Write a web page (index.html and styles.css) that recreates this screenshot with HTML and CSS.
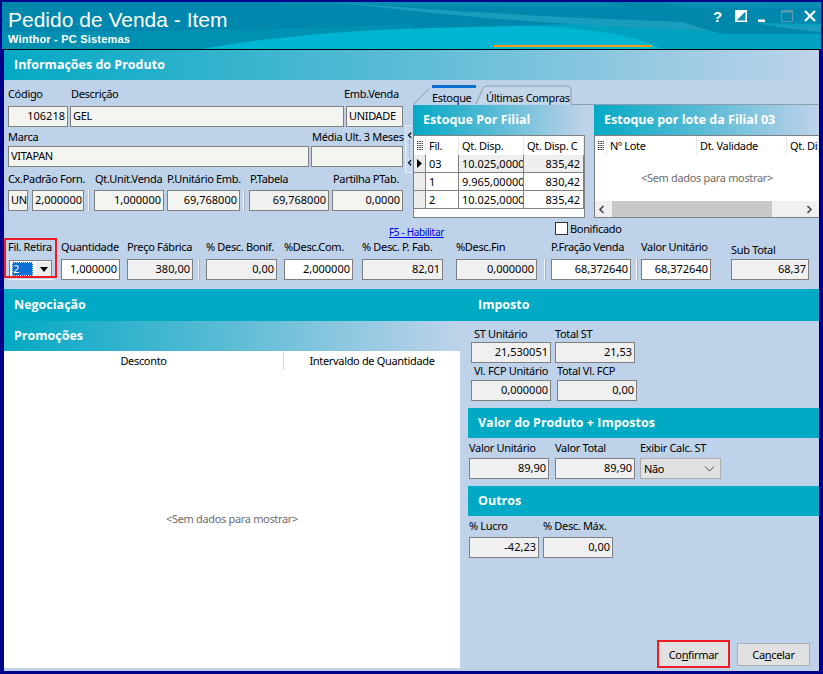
FILE: index.html
```html
<!DOCTYPE html>
<html lang="pt-BR">
<head>
<meta charset="utf-8">
<title>Pedido de Venda - Item</title>
<link rel="stylesheet" href="styles.css">
</head>
<body>
<div class="window">
  <header class="titlebar">
    <svg class="swoosh" viewBox="0 0 819 47" preserveAspectRatio="none" aria-hidden="true">
      <path d="M0 0H819V47H0Z" fill="#0087ad"/>
      <path d="M260 47C420 22 600 18 819 22V47Z" fill="#00a2c0"/>
      <path d="M280 47C420 36 520 30 560 26C450 30 340 38 280 47Z" fill="#00bdd6"/>
      <path d="M270 0C360 4 430 5 819 6V0Z" fill="#0a8fb2"/>
      <path d="M330 0C480 12 640 20 819 24V32C620 28 480 18 330 0Z" fill="#1a9cbc"/>
      <path d="M0 30C120 30 340 26 411 22V47H0Z" fill="#0094b4" opacity=".75"/>
      <path d="M200 47C300 30 380 26 520 24C600 26 640 36 660 47Z" fill="#00b6d2"/>
      <path d="M600 0C640 8 680 20 720 32H819V30C760 24 700 12 660 0Z" fill="#0088ab"/>
      <path d="M492 43H650V45H492Z" fill="#f39a16"/>
    </svg>
    <div class="title-text">
      <h1 class="title">Pedido de Venda - Item</h1>
      <p class="subtitle">Winthor - PC Sistemas</p>
    </div>
    <div class="winbtns">
      <span class="help">?</span>
      <svg class="wb w12" viewBox="0 0 12 12" aria-hidden="true"><path d="M0 0H12V12H0Z" fill="#fff"/><path d="M10.5 1.5V10.5H1.5Z" fill="#0a8fb2"/></svg>
      <svg class="wb w8" viewBox="0 0 8 12" aria-hidden="true"><path d="M0 9.5H7V12H0Z" fill="#fff"/></svg>
      <svg class="wb w12" viewBox="0 0 12 12" aria-hidden="true"><path d="M.5.5H11.5V11.5H.5Z" fill="none" stroke="#5f9cb2"/><path d="M0 0H12V2.5H0Z" fill="#5f9cb2"/></svg>
      <svg class="wb w12" viewBox="0 0 12 12" aria-hidden="true"><path d="M1 1L11 11M11 1L1 11" stroke="#fff" stroke-width="2.2"/></svg>
    </div>
  </header>

  <main class="panel">
    <div class="sec grad h30">Informações do Produto</div>

    <section class="top">
      <div class="product">
        <div class="row r1">
          <div class="f w60"><label class="lbl">Código</label><div class="box ro2 num">106218</div></div>
          <div class="f w274 ml2"><label class="lbl nudge1">Descrição</label><div class="box ro2">GEL</div></div>
          <div class="f w57 ml2"><label class="lbl nudgen2">Emb.Venda</label><div class="box ro2">UNIDADE</div></div>
        </div>
        <div class="row r2">
          <div class="f w301"><label class="lbl">Marca</label><div class="box ro2">VITAPAN</div></div>
          <div class="f w92 ml2"><label class="lbl nudge1">Média Ult. 3 Meses</label><div class="box ro2"></div></div>
        </div>
        <div class="row r3">
          <div class="f w20"><label class="lbl">Cx.Padrão Forn.</label><div class="box ro2">UN</div></div>
          <div class="f w52 ml4"><label class="lbl">&nbsp;</label><div class="box ro2 num">2,000000</div></div>
          <span class="sep ml4"></span>
          <div class="f w70 ml4"><label class="lbl nudge1">Qt.Unit.Venda</label><div class="box ro2 num">1,000000</div></div>
          <div class="f w73 ml3"><label class="lbl">P.Unitário Emb.</label><div class="box ro2 num">69,768000</div></div>
          <span class="sep ml3"></span>
          <div class="f w80 ml4"><label class="lbl nudge1">P.Tabela</label><div class="box ro num">69,768000</div></div>
          <div class="f w71 ml3"><label class="lbl nudge1">Partilha PTab.</label><div class="box ro2 num">0,0000</div></div>
        </div>
      </div>

      <div class="splitter">
        <svg viewBox="0 0 7 48" aria-hidden="true"><path d="M6 5L3 8L6 11M6 37L3 40L6 43" fill="none" stroke="#000" stroke-width="1.4"/><path d="M4 14V34" stroke="#3c78c8" stroke-dasharray="1 2"/></svg>
      </div>

      <div class="tabs">
        <div class="tabstrip">
          <svg class="tabline" viewBox="0 0 406 20" aria-hidden="true">
            <path d="M0 19.5L16 4" fill="none" stroke="#8c9cac"/>
            <path d="M19 .5H63" stroke="#0a6fd0" stroke-width="3" transform="translate(0 1)"/>
            <path d="M63 19L70 3Q71 1 74 1H153Q158 1 158 5V19" fill="#c4d6ea" stroke="#8c9cac"/>
            <path d="M158 19.5H406" stroke="#8c9cac"/>
          </svg>
          <span class="tab tab-a">Estoque</span>
          <span class="tab tab-b">Últimas Compras</span>
        </div>
        <div class="panes">
          <div class="pane w172">
            <div class="sec grad h30 pane-h">Estoque Por Filial</div>
            <div class="grid g1">
              <span class="c ind hd"><svg class="lst" viewBox="0 0 6 9" aria-hidden="true"><path d="M0 .5H6M0 2.5H6M0 4.5H6M0 6.5H6M0 8.5H6" stroke="#222" stroke-dasharray="1 .6"/></svg></span>
              <span class="c hd">Fil.</span><span class="c hd">Qt. Disp.</span><span class="c hd">Qt. Disp. C</span>
              <span class="c ind"><svg class="arr" viewBox="0 0 5 9" aria-hidden="true"><path d="M0 0L5 4.5L0 9Z" fill="#000"/></svg></span>
              <span class="c">03</span><span class="c sel">10.025,00000</span><span class="c sel num">835,42</span>
              <span class="c ind"></span><span class="c">1</span><span class="c">9.965,000000</span><span class="c num">830,42</span>
              <span class="c ind"></span><span class="c">2</span><span class="c">10.025,00000</span><span class="c num">835,42</span>
            </div>
          </div>
          <div class="pane w225">
            <div class="sec grad h30 pane-h">Estoque por lote da Filial 03</div>
            <div class="grid g2">
              <div class="g2-head">
                <span class="c hd"><svg class="lst" viewBox="0 0 6 9" aria-hidden="true"><path d="M0 .5H6M0 2.5H6M0 4.5H6M0 6.5H6M0 8.5H6" stroke="#222" stroke-dasharray="1 .6"/></svg></span>
                <span class="c hd">Nº Lote</span><span class="c hd">Dt. Validade</span><span class="c hd">Qt. Disp.</span>
              </div>
              <div class="empty">&lt;Sem dados para mostrar&gt;</div>
              <div class="hscroll">
                <svg class="sarrow" viewBox="0 0 7 9" aria-hidden="true"><path d="M5.5 1L2 4.5L5.5 8" fill="none" stroke="#444" stroke-width="1.6"/></svg>
                <span class="thumb"></span>
                <svg class="sarrow" viewBox="0 0 7 9" aria-hidden="true"><path d="M1.5 1L5 4.5L1.5 8" fill="none" stroke="#444" stroke-width="1.6"/></svg>
              </div>
            </div>
          </div>
        </div>
      </div>
    </section>

    <section class="pricing">
      <div class="linkrow">
        <a class="f5" href="#">F5 - Habilitar</a>
        <span class="chk"></span><span class="chk-l">Bonificado</span>
      </div>
      <div class="row r4">
        <div class="f w46 fil"><label class="lbl">Fil. Retira</label>
          <div class="combo">
            <div class="combo-in"><span class="combo-v">2</span><span class="combo-b"><svg viewBox="0 0 8 5" aria-hidden="true"><path d="M0 0H8L4 5Z" fill="#000"/></svg></span></div>
          </div>
        </div>
        <div class="f w59 ml7"><label class="lbl">Quantidade</label><div class="box num">1,000000</div></div>
        <div class="f w66 ml7"><label class="lbl">Preço Fábrica</label><div class="box ro num">380,00</div></div>
        <span class="sep ml5"></span>
        <div class="f w71 ml6"><label class="lbl">% Desc. Bonif.</label><div class="box ro num">0,00</div></div>
        <div class="f w69 ml7"><label class="lbl">%Desc.Com.</label><div class="box num">2,000000</div></div>
        <div class="f w81 ml9"><label class="lbl">% Desc. P. Fab.</label><div class="box ro num">82,01</div></div>
        <div class="f w81 ml13"><label class="lbl">%Desc.Fin</label><div class="box ro num">0,000000</div></div>
        <span class="sep ml7"></span>
        <div class="f w80 ml5"><label class="lbl">P.Fração Venda</label><div class="box num">68,372640</div></div>
        <span class="sep ml5"></span>
        <div class="f w70 ml3"><label class="lbl">Valor Unitário</label><div class="box num">68,372640</div></div>
        <div class="f w78 ml20 sub"><label class="lbl">Sub Total</label><div class="box ro num">68,37</div></div>
      </div>
    </section>

    <div class="sec solid h32 split-h"><span class="neg">Negociação</span><span>Imposto</span></div>

    <section class="lower">
      <div class="left">
        <div class="sec grad h30">Promoções</div>
        <div class="promo">
          <div class="promo-head"><span class="ph1">Desconto</span><span class="ph2">Intervaldo de Quantidade</span></div>
          <div class="empty promo-empty">&lt;Sem dados para mostrar&gt;</div>
        </div>
      </div>
      <div class="right">
        <div class="row r5">
          <div class="f w80"><label class="lbl nudge3">ST Unitário</label><div class="box ro num">21,530051</div></div>
          <div class="f w80 ml4"><label class="lbl">Total ST</label><div class="box ro num">21,53</div></div>
        </div>
        <div class="row r6">
          <div class="f w80"><label class="lbl nudge3">Vl. FCP Unitário</label><div class="box ro num">0,000000</div></div>
          <div class="f w80 ml6"><label class="lbl">Total Vl. FCP</label><div class="box ro num">0,00</div></div>
        </div>
        <div class="sec solid h30 bar mt7">Valor do Produto + Impostos</div>
        <div class="row r7">
          <div class="f w80"><label class="lbl">Valor Unitário</label><div class="box ro num">89,90</div></div>
          <div class="f w80 ml6"><label class="lbl">Valor Total</label><div class="box ro num">89,90</div></div>
          <div class="f w81 ml5"><label class="lbl">Exibir Calc. ST</label>
            <div class="select"><span>Não</span><svg viewBox="0 0 11 6" aria-hidden="true"><path d="M1 .5L5.5 5L10 .5" fill="none" stroke="#444"/></svg></div>
          </div>
        </div>
        <div class="sec solid h30 bar mt7">Outros</div>
        <div class="row r8">
          <div class="f w70"><label class="lbl">% Lucro</label><div class="box ro num">-42,23</div></div>
          <div class="f w70 ml4"><label class="lbl">% Desc. Máx.</label><div class="box ro num">0,00</div></div>
        </div>
        <div class="actions">
          <button class="btn primary" type="button">Co<u>n</u>firmar</button>
          <button class="btn" type="button">Ca<u>n</u>celar</button>
        </div>
      </div>
    </section>
  </main>
</div>
</body>
</html>
```
FILE: styles.css
```css
* { box-sizing: border-box; }
html, body { margin: 0; padding: 0; }
body { width: 823px; height: 674px; overflow: hidden; font-family: "Noto Sans", "Liberation Sans", sans-serif; font-size: 11px; letter-spacing: -.33px; color: #000; }
h1, p { margin: 0; }

.window { width: 823px; height: 674px; padding: 2px 2px 3px; background: #00008b; display: flex; flex-direction: column; }
.titlebar { position: relative; height: 47px; flex: none; display: flex; justify-content: space-between; color: #fff; background: #0087ad; overflow: hidden; }
.swoosh { position: absolute; left: 0; top: 0; width: 100%; height: 100%; }
.title-text { position: relative; padding: 6px 0 0 6px; }
.title { font: 400 21px/24px "Liberation Sans", sans-serif; letter-spacing: 0; }
.subtitle { font: 700 11px/13px "Liberation Sans", sans-serif; letter-spacing: .2px; margin-top: 1px; }
.winbtns { position: relative; display: flex; align-items: flex-start; padding: 8px 5px 0 0; }
.help { font: 700 15px/13px "Liberation Sans", sans-serif; letter-spacing: 0; width: 22px; }
.wb { display: block; height: 12px; }
.wb.w12 { width: 12px; margin-right: 11px; }
.wb.w8 { width: 8px; margin-right: 15px; }
.wb:last-child { margin-right: 0; }

.panel { flex: 1; margin: 0 1px; min-height: 0; background: #bed3ea; border: 1px solid #000; border-bottom: 0; display: flex; flex-direction: column; }

.sec { flex: none; color: #fff; font: 700 12.5px "Open Sans", sans-serif; letter-spacing: 0; display: flex; align-items: center; padding: 0 0 1px 10px; }
.h30 { height: 30px; }
.h32 { height: 32px; }
.grad { background: linear-gradient(90deg, #04a9c4 0%, #5dbcd6 50%, #bed3ea 100%); }
.solid { background: #00aac4; }

.top { height: 139px; flex: none; display: flex; }
.product { width: 401px; flex: none; padding: 6px 0 0 4px; }
.row { display: flex; align-items: flex-end; }
.f { display: flex; flex-direction: column; flex: none; }
.lbl { display: block; white-space: nowrap; }
.r1 .lbl { height: 20px; line-height: 16px; }
.r2 .lbl { height: 19px; line-height: 19px; }
.r3 .lbl { height: 23px; line-height: 23px; }
.r4 .lbl { height: 19px; line-height: 14px; }
.r4 .sub .lbl { line-height: 20px; }
.nudge1 { padding-left: 1px; }
.nudge3 { padding-left: 3px; }
.nudgen2 { margin-left: -2px; }

.box { height: 21px; line-height: 18px; border: 1px solid #7f7f7f; background: #fff; padding: 0 2px; white-space: nowrap; overflow: hidden; font-size: 11px; }
.ro { background: #f0f0f0; }
.ro2 { background: #f4f4f1; }
.num { text-align: right; letter-spacing: 0; }
.sep { display: block; flex: none; width: 2px; height: 21px; background: #f2f4f6; border-right: 1px solid #a9b2bb; }

.w20 { width: 20px; } .w46 { width: 46px; } .w52 { width: 52px; } .w57 { width: 57px; } .w59 { width: 59px; }
.w60 { width: 60px; } .w66 { width: 66px; } .w69 { width: 69px; } .w70 { width: 70px; } .w71 { width: 71px; }
.w73 { width: 73px; } .w78 { width: 78px; } .w80 { width: 80px; } .w81 { width: 81px; } .w92 { width: 92px; }
.w172 { width: 172px; } .w225 { width: 225px; } .w274 { width: 274px; } .w301 { width: 301px; }
.ml2 { margin-left: 2px; } .ml3 { margin-left: 3px; } .ml4 { margin-left: 4px; } .ml5 { margin-left: 5px; }
.ml6 { margin-left: 6px; } .ml7 { margin-left: 7px; } .ml9 { margin-left: 9px; } .ml13 { margin-left: 13px; } .ml20 { margin-left: 20px; }
.mt7 { margin-top: 7px; }

.splitter { width: 7px; height: 48px; flex: none; margin: 45px 1px 0 0; background: #c9d8ea; border: 1px solid #e6edf5; border-right: 0; }
.splitter svg { display: block; width: 100%; height: 100%; }

.tabs { width: 406px; flex: none; }
.tabstrip { position: relative; height: 25px; padding-top: 5px; display: flex; align-items: center; }
.tabline { position: absolute; left: 0; top: 5px; width: 406px; height: 20px; }
.tab { position: relative; line-height: 14px; margin-top: 5px; white-space: nowrap; }
.tab-a { margin-left: 19px; width: 54px; }
.tab-b { margin-left: 0; }
.panes { display: flex; gap: 9px; }
.pane { flex: none; }
.pane-h { padding-left: 10px; }

.grid { height: 83px; background: #fff; border: 1px solid #808080; border-top-width: 1px; overflow: hidden; }
.g1 { display: grid; grid-template-columns: 12px 33px 65px 60px; grid-template-rows: 19px 18px 18px 18px; }
.c { display: block; padding: 0 2px 0 3px; overflow: hidden; white-space: nowrap; line-height: 17px; letter-spacing: 0; border-right: 1px solid #808080; border-bottom: 1px solid #808080; }
.hd { line-height: 19px; letter-spacing: -.33px; border-color: #e9e9e9; border-bottom: 0; }
.ind { background: #ececec; padding: 0; display: flex; align-items: center; justify-content: center; }
.ind.hd { background: #fff; }
.sel { background: #eeeeee; }
.c.num { text-align: right; padding-right: 3px; }
.lst { width: 6px; height: 9px; display: block; }
.arr { width: 5px; height: 9px; display: block; }
.g2 { display: flex; flex-direction: column; border-right: 0; }
.g2-head { display: grid; grid-template-columns: 12px 90px 90px 1fr; height: 19px; flex: none; }
.g2-head .c:first-child { display: flex; align-items: center; justify-content: center; padding: 0; }
.empty { color: #6d6d6d; text-align: center; }
.g2 .empty { flex: 1; padding-top: 15px; }
.hscroll { height: 16px; flex: none; background: #f0f0f0; display: flex; align-items: center; justify-content: space-between; padding: 0 6px 0 3px; }
.thumb { width: 160px; height: 100%; background: #c8c8c8; margin-left: 0; margin-right: 28px; }
.sarrow { width: 7px; height: 9px; display: block; }

.pricing { height: 70px; flex: none; padding-left: 4px; }
.linkrow { height: 21px; display: flex; align-items: flex-start; }
.f5 { margin: 8px 0 0 381px; line-height: 11px; font-size: 10px; color: #0000ee; white-space: nowrap; width: 166px; }
.chk { width: 13px; height: 13px; margin-top: 3px; background: #fff; border: 1px solid #333; flex: none; }
.chk-l { margin: 2px 0 0 2px; line-height: 15px; }
.fil { position: relative; }
.fil::after { content: ""; position: absolute; left: -4px; right: -3px; top: -2px; bottom: 2px; border: 2px solid #ef1c25; pointer-events: none; }
.combo { height: 21px; padding: 1px 2px 2px 1px; border-bottom: 1px solid #f4f6f8; }
.combo-in { height: 100%; display: flex; background: #fff; border: 1px solid #7f7f7f; padding: 1px 0 0 2px; }
.combo-v { width: 22px; background: #0a6fd8; color: #fff; line-height: 14px; padding-left: 1px; outline: 1px dotted #cfe2f8; outline-offset: -1px; }
.combo-b { width: 16px; margin-left: 2px; background: #ececec; border-left: 1px solid #f8f8f8; display: flex; align-items: center; justify-content: center; }
.combo-b svg { width: 8px; height: 5px; display: block; }

.split-h { justify-content: flex-start; }
.neg { width: 464px; }

.lower { flex: 1; min-height: 0; display: flex; }
.left { width: 456px; flex: none; display: flex; flex-direction: column; padding-bottom: 3px; }
.promo { flex: 1; background: #fff; display: flex; flex-direction: column; }
.promo-head { display: flex; height: 19px; flex: none; line-height: 19px; text-align: center; }
.ph1 { width: 280px; border-right: 1px solid #d9d9d9; }
.ph2 { flex: 1; }
.promo-empty { flex: 1; padding-top: 141px; }

.right { flex: 1; display: flex; flex-direction: column; padding: 0 0 3px 8px; }
.r5 .lbl, .r6 .lbl, .r7 .lbl, .r8 .lbl { line-height: 14px; }
.r5 { padding-left: 3px; }
.r5 .lbl { height: 21px; padding-top: 6px; }
.r6 { padding-left: 3px; }
.r6 .lbl { height: 17px; padding-top: 1px; }
.r7, .r8 { padding-left: 1px; }
.r7 .lbl { height: 20px; padding-top: 3px; }
.r8 .lbl { height: 21px; padding-top: 3px; }
.select { height: 21px; background: #e1e1e1; border: 1px solid #adadad; padding: 0 5px 0 3px; display: flex; align-items: center; justify-content: space-between; }
.select svg { width: 11px; height: 6px; display: block; }
.actions { margin-top: auto; display: flex; justify-content: flex-end; align-items: center; padding-right: 9px; }
.btn { width: 73px; height: 23px; margin-left: 7px; padding: 0; background: #e1e1e1; border: 1px solid #adadad; font: 11px "Noto Sans", "Liberation Sans", sans-serif; letter-spacing: -.33px; color: #000; }
.primary { height: 28px; border: 2px solid #ef1c25; }
```
